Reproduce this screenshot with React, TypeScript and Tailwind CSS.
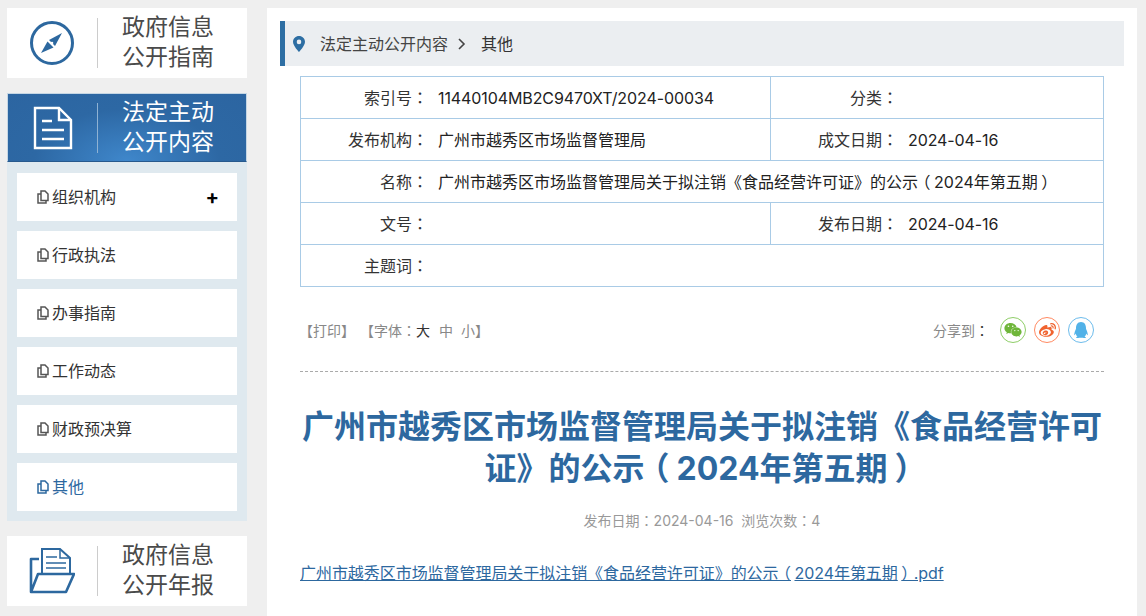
import React from 'react';
import { FaWeixin, FaWeibo, FaQq } from 'react-icons/fa';

const font = "font-['Inter','Noto_Sans_CJK_SC',sans-serif]";

// the reference centres full-width punctuation, the SC forms sit to one side
const punct = (text: string) =>
  text.split(/([：（）])/).map((part, i) => {
    if (part === '：') {
      return (
        <span key={i} className="font-['Noto_Sans_CJK_TC',sans-serif] leading-[0]">
          {part}
        </span>
      );
    }
    if (part === '（') {
      return (
        <span key={i} className="-ml-[0.22em] mr-[0.22em]">
          {part}
        </span>
      );
    }
    if (part === '）') {
      return (
        <span key={i} className="ml-[0.22em] -mr-[0.22em]">
          {part}
        </span>
      );
    }
    return part;
  });

const CompassIcon = () => (
  <svg width="46" height="46" viewBox="0 0 46 46" fill="none">
    <circle cx="23" cy="23" r="20.5" stroke="#2d689f" strokeWidth="3" />
    <path d="M33 13 L26 26 L20 20 Z" fill="#2d689f" />
    <path d="M12 33 L18.5 21.5 L24.5 27.5 Z" fill="#2d689f" />
    <circle cx="23" cy="23" r="1.3" fill="#fff" />
  </svg>
);

const DocIcon = () => (
  <svg width="40" height="44" viewBox="0 0 40 44" fill="none" stroke="#fff" strokeWidth="2.4">
    <path d="M2 2 H26 L38 14 V42 H2 Z" />
    <path d="M26 2 V14 H38" />
    <path d="M9 15 H19 M9 24 H31 M9 33 H31" />
  </svg>
);

const FolderIcon = () => (
  <svg width="46" height="48" viewBox="0 0 46 48" fill="none" stroke="#2d689f">
    <path d="M13 27 V2 H31 L41 11 V26" strokeWidth="2" />
    <path d="M31 2 V11 H41" strokeWidth="1.5" />
    <path d="M17 10 H28 M17 16 H37 M17 21 H37" strokeWidth="1.5" />
    <path d="M10 12 H2 V45 H37 L45 27 H9 L2 45" strokeWidth="2.6" strokeLinejoin="round" />
  </svg>
);

const PageIcon = ({ color }: { color: string }) => (
  <svg width="12" height="14" viewBox="0 0 12 14" fill="none" stroke={color} strokeWidth="1.5" className="shrink-0">
    <path d="M4 1 H8 L11 4 V10.5 H4 Z" />
    <path d="M4 4 H1 V13 H9 V10.5" />
  </svg>
);

const SideCard: React.FC<{ icon: React.ReactNode; lines: string[]; active?: boolean }> = ({ icon, lines, active }) => (
  <div
    className={`flex items-center ${
      active
        ? 'h-[69px] border border-[#c5d6e4] bg-[radial-gradient(ellipse_at_50%_100%,#3f87cb_0%,#2d68a4_55%,#2c65a1_100%)] border-b-[#27598d]'
        : 'h-[70px] bg-white'
    }`}
  >
    <div className={`flex justify-center shrink-0 ${active ? 'w-[89px]' : 'w-[90px]'}`}>{icon}</div>
    <div className={`w-px h-[50px] ${active ? 'bg-[#8fb2d3]' : 'bg-[#cccccc]'}`} />
    <div className={`pl-[24px] text-[23px] leading-[30px] ${active ? '-mt-[1px] text-white' : '-mt-[3px] text-[#4a4a4a]'}`}>
      {lines.map((line) => (
        <div key={line}>{line}</div>
      ))}
    </div>
  </div>
);

const menu = ['组织机构', '行政执法', '办事指南', '工作动态', '财政预决算', '其他'];

const Sidebar = () => (
  <div className="w-[240px] shrink-0 pt-2">
    <SideCard icon={<CompassIcon />} lines={['政府信息', '公开指南']} />
    <div className="mt-[15px] bg-[#dfe9ef]">
      <SideCard icon={<DocIcon />} lines={['法定主动', '公开内容']} active />
      <div className="px-[10px] pt-[11px] pb-[10px] flex flex-col gap-[10px]">
        {menu.map((item, i) => {
          const last = i === menu.length - 1;
          return (
            <div key={item} className="h-[48px] bg-white flex items-center pl-[20px] pr-[18px] gap-[3px]">
              <PageIcon color={last ? '#2d689f' : '#555555'} />
              <span className={`text-[16px] ${last ? 'text-[#2d689f]' : 'text-[#333333]'}`}>{item}</span>
              {i === 0 && <span className="ml-auto text-[20px] leading-none font-bold text-black">+</span>}
            </div>
          );
        })}
      </div>
    </div>
    <div className="mt-[15px]">
      <SideCard icon={<FolderIcon />} lines={['政府信息', '公开年报']} />
    </div>
  </div>
);

const Row: React.FC<{ children: React.ReactNode; last?: boolean }> = ({ children, last }) => (
  <div className={`flex items-center text-[16px] text-[#222222] ${last ? 'h-[41px]' : 'h-[42px] border-b border-[#a9cbe6]'}`}>
    {children}
  </div>
);

const Label: React.FC<{ text: string }> = ({ text }) => (
  <div className="w-[127px] shrink-0 text-right text-[#333333]">{punct(`${text}：`)}</div>
);

const Pair: React.FC<{ left: [string, string]; right: [string, string]; code?: boolean }> = ({ left, right, code }) => (
  <>
    <div className="w-[470px] h-full flex items-center border-r border-[#a9cbe6] shrink-0">
      <Label text={left[0]} />
      <div className={`pl-[10px] ${code ? 'tracking-[-0.1px]' : ''}`}>{left[1]}</div>
    </div>
    <Label text={right[0]} />
    <div className="pl-[10px] tracking-[-0.1px]">{right[1]}</div>
  </>
);

const InfoTable = () => (
  <div className="ml-[33px] mr-[33px] mt-[10px] border border-[#a9cbe6]">
    <Row>
      <Pair code left={['索引号', '11440104MB2C9470XT/2024-00034']} right={['分类', '']} />
    </Row>
    <Row>
      <Pair left={['发布机构', '广州市越秀区市场监督管理局']} right={['成文日期', '2024-04-16']} />
    </Row>
    <Row>
      <Label text="名称" />
      <div className="pl-[10px] whitespace-nowrap">
        {punct('广州市越秀区市场监督管理局关于拟注销《食品经营许可证》的公示（2024年第五期）')}
      </div>
    </Row>
    <Row>
      <Pair left={['文号', '']} right={['发布日期', '2024-04-16']} />
    </Row>
    <Row last>
      <Label text="主题词" />
    </Row>
  </div>
);

const ShareBar = () => (
  <div className="mx-[33px] h-[85px] border-b border-dashed border-[#aaaaaa] flex items-start justify-between pt-[30px]">
    <div className="text-[14px] leading-[28px] text-[#888888] h-[28px] -ml-[1px] whitespace-nowrap">
      【打印】<span className="ml-[12px]">【字体</span>
      {punct('：')}
      <span className="text-[#333333]">大</span>
      <span className="ml-[9px]">中</span>
      <span className="ml-[8px]">小</span>】
    </div>
    <div className="flex items-center gap-[8px] pr-[10px]">
      <span className="text-[14px] text-[#888888] mr-[3px]">
        分享到<span className="text-[#333333]">{punct('：')}</span>
      </span>
      <div className="w-[26px] h-[26px] rounded-full border border-[#8fce68] flex items-center justify-center">
        <FaWeixin size={18} color="#6fb63a" />
      </div>
      <div className="w-[26px] h-[26px] rounded-full border border-[#ff8a62] flex items-center justify-center">
        <FaWeibo size={17} color="#f0632f" />
      </div>
      <div className="w-[26px] h-[26px] rounded-full border border-[#6dbcec] flex items-center justify-center">
        <FaQq size={16} color="#52b2e8" />
      </div>
    </div>
  </div>
);

export default function App() {
  return (
    <div className={`${font} h-[616px] w-[1146px] overflow-hidden bg-[#efefef] flex pl-[7px]`}>
      <Sidebar />
      <div className="ml-[20px] mt-2 w-[870px] h-[608px] bg-white pt-[13px]">
        <div className="ml-[13px] w-[844px] h-[45px] bg-[#ebeef1] border-l-[5px] border-[#2d6ea3] flex items-center text-[16px] text-[#444444]">
          <svg width="12" height="16" viewBox="0 0 12 16" className="ml-[8px]">
            <path
              fillRule="evenodd"
              d="M6 0 C2.7 0 0 2.6 0 5.8 C0 10 6 16 6 16 C6 16 12 10 12 5.8 C12 2.6 9.3 0 6 0 Z M6 3.6 A2.3 2.3 0 1 1 6 8.2 A2.3 2.3 0 0 1 6 3.6 Z"
              fill="#2d6ea3"
            />
          </svg>
          <span className="ml-[15px]">法定主动公开内容</span>
          <svg width="10" height="12" viewBox="0 0 10 12" fill="none" stroke="#444444" strokeWidth="1.6" className="ml-[9px]">
            <path d="M2 1 L7 6 L2 11" />
          </svg>
          <span className="ml-[14px] text-[#333333]">其他</span>
        </div>
        <InfoTable />
        <ShareBar />
        <h1 className="mx-[33px] mt-[34px] text-center text-[32px] leading-[42px] font-bold text-[#2d689f]">
          {punct('广州市越秀区市场监督管理局关于拟注销《食品经营许可证》的公示（2024年第五期）')}
        </h1>
        <div className="mt-[21px] text-center text-[14px] leading-[20px] text-[#999999]">
          发布日期{punct('：')}2024-04-16&nbsp;&nbsp;浏览次数{punct('：')}4
        </div>
        <div className="mx-[33px] mt-[30px] text-[16px] leading-[24px] text-[#2d689f] underline tracking-[-0.05px] whitespace-nowrap">
          {punct('广州市越秀区市场监督管理局关于拟注销《食品经营许可证》的公示（2024年第五期）')}.pdf
        </div>
      </div>
    </div>
  );
}
